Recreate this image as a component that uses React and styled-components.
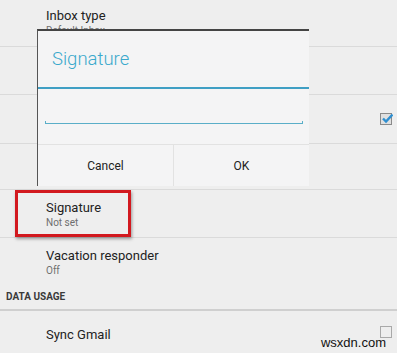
import React from 'react';
import styled, { createGlobalStyle } from 'styled-components'

const Global = createGlobalStyle`
  body {
    margin: 0;
    background: #eeeeee;
    font-family: Roboto, 'Liberation Sans', sans-serif;
  }
`

const Screen = styled.div`
  position: relative;
  width: 397px;
  height: 353px;
  overflow: hidden;
  background: #eeeeee;
`

const Row = styled.div`
  display: flex;
  align-items: center;
  height: ${props => props.h || 47}px;
  padding: ${props => props.pt || 0}px 5px 0 46px;
  box-sizing: border-box;
  border-bottom: ${props => props.last ? 'none' : '1px solid #dadada'};
`

const Texts = styled.div`
  display: flex;
  flex-direction: column;
  flex: 1;
`

const Title = styled.span`
  color: #222;
  font-size: 13px;
  line-height: 16px;
`

const Sub = styled.span`
  color: #6e6e6e;
  font-size: 10px;
  line-height: 14px;
`

const Section = styled.div`
  height: 25px;
  padding: 0 0 0 6px;
  display: flex;
  align-items: center;
  font-size: 10px;
  font-weight: bold;
  color: #3a3a3a;
  border-bottom: 2px solid #cfcfcf;
`

const Box = styled.div`
  width: 10px;
  height: 10px;
  border: 1px solid ${props => props.checked ? '#8a8a8a' : '#a9a9a9'};
  background: ${props => props.checked ? '#e0e0e0' : 'transparent'};
  position: relative;
  margin-top: ${props => props.mt || 0}px;
`

const Tick = styled.svg`
  position: absolute;
  left: 0;
  top: -2px;
`

const Check = ({ checked, mt }) => (
  <Box checked={checked} mt={mt}>
    {checked && (
      <Tick width="12" height="12" viewBox="0 0 12 12">
        <path d="M2 6.5 L5 9.5 L11.5 2.5" fill="none" stroke="#2f8fd0" strokeWidth="2.4" />
      </Tick>
    )}
  </Box>
)

const Dialog = styled.div`
  position: absolute;
  left: 37px;
  top: 29px;
  width: 272px;
  height: 157px;
  background: #f4f4f5;
  border-top: 2px solid #444;
  border-left: 1px solid #555;
  box-sizing: border-box;
  display: flex;
  flex-direction: column;
`

const DialogTitle = styled.div`
  height: 56px;
  padding-left: 14px;
  display: flex;
  align-items: center;
  color: #3ba9cc;
  font-size: 18.5px;
  font-weight: 300;
  border-bottom: 2px solid #3f9fc4;
`

const InputArea = styled.div`
  height: 55px;
  padding: 0 6px 0 7px;
  display: flex;
  align-items: flex-start;
  border-bottom: 1px solid #e2e2e2;
`

const Underline = styled.div`
  flex: 1;
  margin-top: 32px;
  height: 3px;
  border: 1px solid #5aaec8;
  border-top: none;
  box-sizing: border-box;
`

const Buttons = styled.div`
  flex: 1;
  display: flex;
`

const Btn = styled.div`
  flex: 1;
  display: flex;
  align-items: center;
  justify-content: center;
  font-size: 12px;
  color: #222;
  border-left: ${props => props.first ? 'none' : '1px solid #e2e2e2'};
`

const Highlight = styled.div`
  position: absolute;
  left: 15px;
  top: 190px;
  width: 116px;
  height: 47px;
  box-sizing: border-box;
  border: 3px solid #d2191f;
  box-shadow: 1px 2px 3px rgba(0, 0, 0, 0.35);
`

const Mark = styled.span`
  position: absolute;
  right: 11px;
  bottom: 3px;
  font-family: 'Liberation Sans', Arial, sans-serif;
  font-size: 13px;
  color: #111;
`

export default function App() {
  return (
    <Screen>
      <Global />
      <Row h={47}>
        <Texts>
          <Title>Inbox type</Title>
          <Sub>Default Inbox</Sub>
        </Texts>
      </Row>
      <Row h={48} />
      <Row h={49}>
        <Texts />
        <Check checked />
      </Row>
      <Row h={46} />
      <Row h={48} pt={3}>
        <Texts>
          <Title>Signature</Title>
          <Sub>Not set</Sub>
        </Texts>
      </Row>
      <Row h={46} pt={4} last>
        <Texts>
          <Title>Vacation responder</Title>
          <Sub>Off</Sub>
        </Texts>
      </Row>
      <Section>DATA USAGE</Section>
      <Row h={48} last>
        <Texts>
          <Title>Sync Gmail</Title>
        </Texts>
        <Check mt={-6} />
      </Row>

      <Dialog>
        <DialogTitle>Signature</DialogTitle>
        <InputArea>
          <Underline />
        </InputArea>
        <Buttons>
          <Btn first>Cancel</Btn>
          <Btn>OK</Btn>
        </Buttons>
      </Dialog>

      <Highlight />
      <Mark>wsxdn.com</Mark>
    </Screen>
  )
}
